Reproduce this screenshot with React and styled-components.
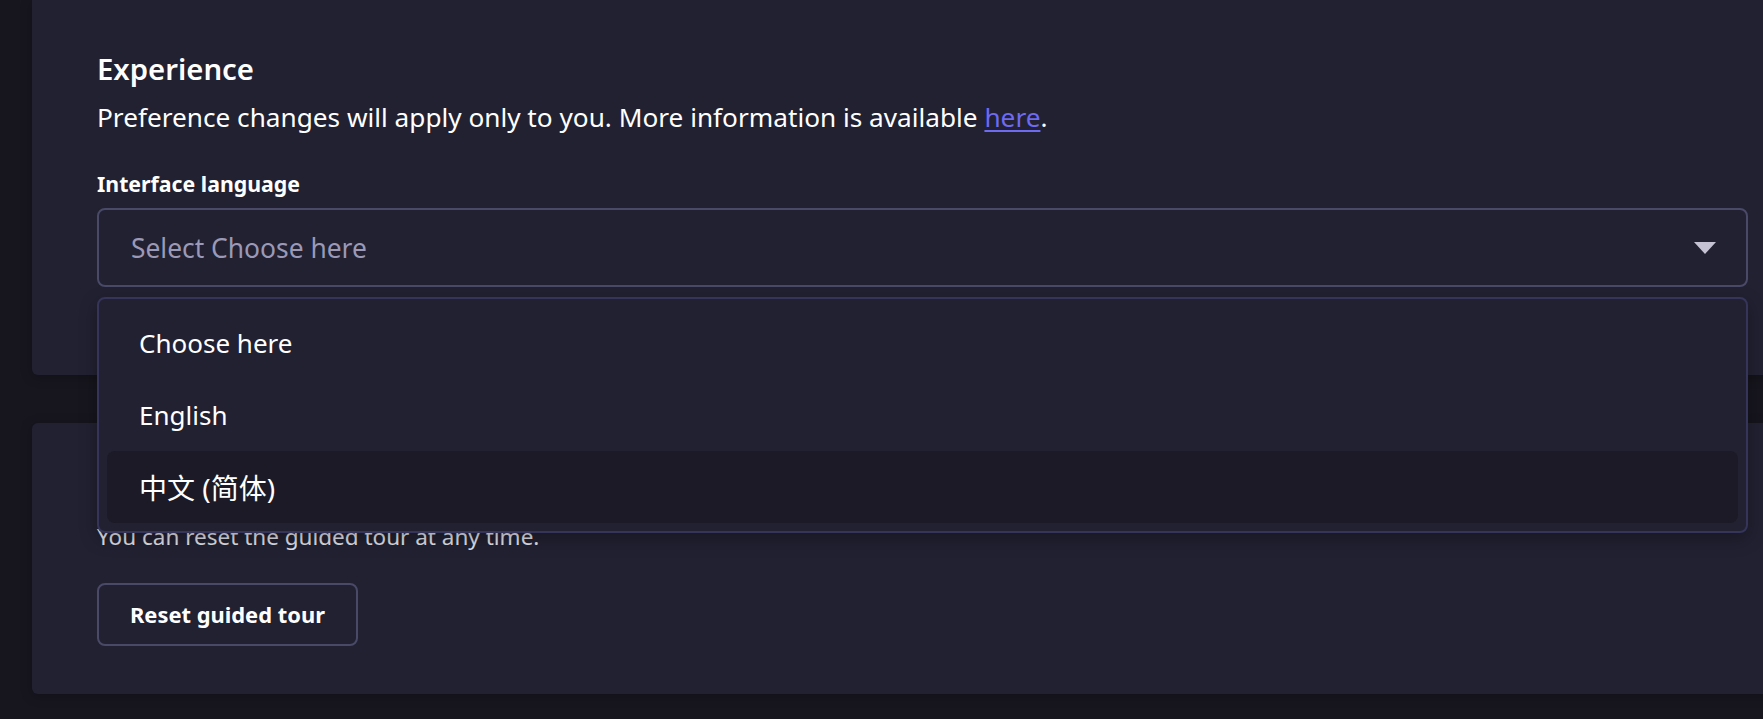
import React from 'react';
import styled, { createGlobalStyle } from 'styled-components';

const GlobalStyle = createGlobalStyle`
  html, body {
    margin: 0;
    padding: 0;
    background: #17161f;
    overflow: hidden;
  }
  body {
    font-family: "Noto Sans", "Noto Sans CJK SC", sans-serif;
    color: #ffffff;
  }
`;

const languages = [
  { label: 'Choose here' },
  { label: 'English' },
  { label: '中文 (简体)', cjk: true },
];

function App() {
  return (
    <>
      <GlobalStyle />
      <Page>
        <Card>
          <Title>Experience</Title>
          <Description>
            Preference changes will apply only to you. More information is available{' '}
            <Link href="#">here</Link>.
          </Description>
          <Field>
            <Label>Interface language</Label>
            <SelectWrap>
              <SelectBox>
                <Placeholder>Select Choose here</Placeholder>
                <Caret />
              </SelectBox>
              <Menu>
                {languages.map((lang, i) => (
                  <Option key={lang.label} $active={i === 2} $cjk={lang.cjk}>
                    {lang.label}
                  </Option>
                ))}
              </Menu>
            </SelectWrap>
          </Field>
        </Card>
        <Card $bottom>
          <Title>Guided tour</Title>
          <SmallText>You can reset the guided tour at any time.</SmallText>
          <Button>Reset guided tour</Button>
        </Card>
      </Page>
    </>
  );
}

const Page = styled.div`
  display: flex;
  flex-direction: column;
  gap: 48px;
  padding-left: 32px;
  width: 1800px;
  height: 719px;
  box-sizing: border-box;
`;

const Card = styled.section`
  display: flex;
  flex-direction: column;
  align-items: flex-start;
  width: 1781px;
  box-sizing: border-box;
  padding: ${(p) => (p.$bottom ? '52px 65px 48px' : '52px 65px 88px')};
  background: #212132;
  border-radius: ${(p) => (p.$bottom ? '6px' : '0 0 6px 6px')};
  box-shadow: 0 2px 12px rgba(0, 0, 0, 0.25);
`;

const Title = styled.h2`
  margin: 0;
  font-size: 29.3px;
  line-height: 34px;
  font-weight: 600;
  color: #ffffff;
`;

const Description = styled.p`
  margin: 16px 0 0;
  font-size: 26.2px;
  line-height: 30px;
  color: #ffffff;
`;

const Link = styled.a`
  color: #6e6af2;
  text-decoration: underline;
  text-underline-offset: 3px;
`;

const Field = styled.div`
  display: flex;
  flex-direction: column;
  align-self: stretch;
  margin-top: 39px;
`;

const Label = styled.label`
  font-size: 21.3px;
  line-height: 26px;
  font-weight: 700;
  color: #ffffff;
`;

const SelectWrap = styled.div`
  position: relative;
  margin-top: 11px;
`;

const SelectBox = styled.div`
  display: flex;
  align-items: center;
  justify-content: space-between;
  height: 79px;
  box-sizing: border-box;
  padding: 0 30px 0 32px;
  border: 2px solid #4a4968;
  border-radius: 8px;
  background: #212132;
`;

const Placeholder = styled.span`
  font-size: 26.4px;
  color: #9b99b6;
`;

const Caret = styled.span`
  width: 0;
  height: 0;
  border-left: 11px solid transparent;
  border-right: 11px solid transparent;
  border-top: 12px solid #c5c3d3;
`;

const Menu = styled.ul`
  position: absolute;
  z-index: 10;
  top: calc(100% + 10px);
  left: 0;
  right: 0;
  margin: 0;
  padding: 8px;
  list-style: none;
  background: #212132;
  border: 2px solid #35345a;
  border-radius: 8px;
  box-shadow: 0 6px 18px rgba(0, 0, 0, 0.3);
`;

const Option = styled.li`
  display: flex;
  align-items: center;
  height: 72px;
  padding-left: 32px;
  border-radius: 8px;
  font-size: ${(p) => (p.$cjk ? '28px' : '26px')};
  color: #ffffff;
  background: ${(p) => (p.$active ? '#1b1a26' : 'transparent')};
`;

const SmallText = styled.p`
  margin: 16px 0 0;
  font-size: 22.5px;
  line-height: 24px;
  color: #e2e2ea;
`;

const Button = styled.button`
  margin-top: 34px;
  height: 63px;
  padding: 0 31px;
  background: transparent;
  border: 2px solid #4a4968;
  border-radius: 8px;
  font-family: inherit;
  font-size: 21.9px;
  font-weight: 700;
  color: #ffffff;
`;

export default App;
